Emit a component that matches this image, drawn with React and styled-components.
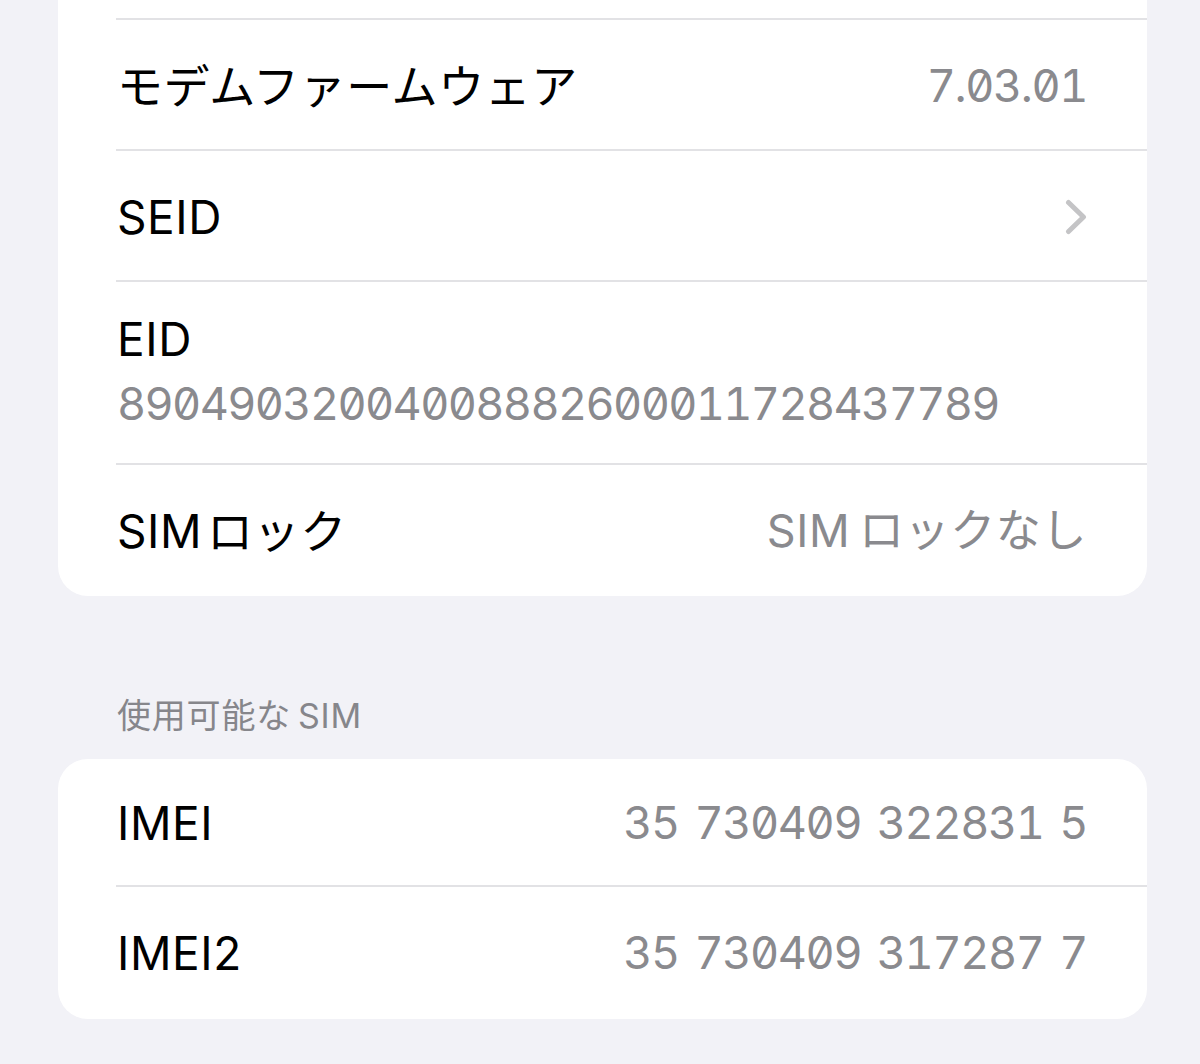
import React from 'react';
import styled, { createGlobalStyle } from 'styled-components';

const GlobalStyle = createGlobalStyle`
  html, body {
    margin: 0;
    padding: 0;
    background: #f2f2f7;
  }
  body {
    font-family: "Inter", "Noto Sans CJK JP", sans-serif;
    -webkit-font-smoothing: antialiased;
  }
`

const Page = styled.div`
  width: 1200px;
  height: 1064px;
  overflow: hidden;
  background: #f2f2f7;
  padding: 0 53px 0 58px;
  box-sizing: border-box;
`
const Card = styled.div`
  background: #ffffff;
  border-radius: ${(p) => (p.$cut ? '0 0 30px 30px' : '30px')};
  overflow: hidden;
`
const Row = styled.div`
  position: relative;
  display: flex;
  align-items: ${(p) => (p.$stacked ? 'flex-start' : 'center')};
  flex-direction: ${(p) => (p.$stacked ? 'column' : 'row')};
  justify-content: ${(p) => (p.$stacked ? 'flex-start' : 'space-between')};
  height: ${(p) => p.$h}px;
  box-sizing: border-box;
  padding: ${(p) => (p.$stacked ? '29px 60px 0 59px' : '0 60px 0 59px')};
  &::after {
    content: '';
    display: ${(p) => (p.$last ? 'none' : 'block')};
    position: absolute;
    left: 58px;
    right: 0;
    bottom: 0;
    height: 2px;
    background: #e2e2e5;
  }
`
const Label = styled.span`
  font-size: 46px;
  line-height: 56px;
  color: #000;
  letter-spacing: 0.6px;
`
const Value = styled.span`
  font-size: 45px;
  line-height: 56px;
  color: #8a8a8e;
  font-feature-settings: 'tnum' 1, 'zero' 1;
  letter-spacing: ${(p) => (p.$text ? '0.6px' : '-1.4px')};
  word-spacing: ${(p) => (p.$text ? '0' : '5px')};
  white-space: nowrap;
`
const SubValue = styled(Value)`
  margin-top: 9px;
  letter-spacing: -1.62px;
`
const SectionHeader = styled.div`
  margin: 100px 0 23px 59px;
  font-size: 34px;
  line-height: 40px;
  color: #86868b;
  letter-spacing: 0.8px;
`
const Chevron = () => (
  <svg width="22" height="36" viewBox="0 0 22 36">
    <path d="M3.5 3.5 L18.5 18 L3.5 32.5" fill="none" stroke="#c4c4c6" strokeWidth="5" strokeLinecap="round" strokeLinejoin="round" />
  </svg>
)

const App = () => {
  return (
    <Page>
      <GlobalStyle />
      <Card $cut>
        <Row $h={20} />
        <Row $h={131}>
          <Label>モデムファームウェア</Label>
          <Value>7.03.01</Value>
        </Row>
        <Row $h={131}>
          <Label>SEID</Label>
          <Chevron />
        </Row>
        <Row $h={183} $stacked>
          <Label>EID</Label>
          <SubValue>89049032004008882600011728437789</SubValue>
        </Row>
        <Row $h={131} $last>
          <Label>SIM{'\u200A'}ロック</Label>
          <Value $text>SIM{'\u2009'}ロックなし</Value>
        </Row>
      </Card>
      <SectionHeader>使用可能な{'\u2009'}SIM</SectionHeader>
      <Card>
        <Row $h={128}>
          <Label>IMEI</Label>
          <Value>35 730409 322831 5</Value>
        </Row>
        <Row $h={132} $last>
          <Label>IMEI2</Label>
          <Value>35 730409 317287 7</Value>
        </Row>
      </Card>
    </Page>
  )
}
export default App
